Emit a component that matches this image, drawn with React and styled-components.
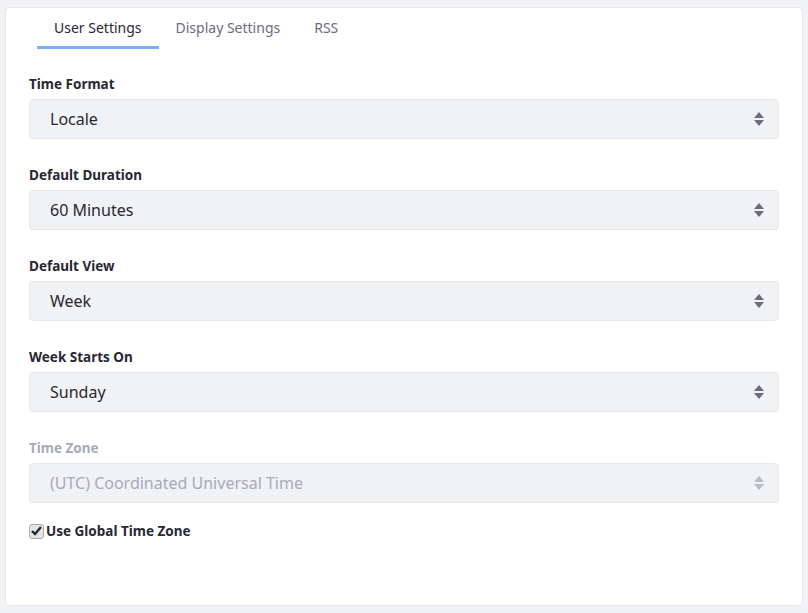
import React from "react";
import styled, { createGlobalStyle } from "styled-components";

const Global = createGlobalStyle`
  body { margin: 0; background: #f1f2f5; font-family: "Noto Sans", "Open Sans", sans-serif; }
`;
const Card = styled.div`
  margin: 7px 5px 0 5px; width: 798px; height: 599px; box-sizing: border-box;
  background: #fff; border: 1px solid #e7e7ed; border-radius: 4px; padding: 0 23px;
`;
const Tabs = styled.div`display: flex; padding-left: 8px; height: 41px;`;
const Tab = styled.div`
  padding: 10px 17px 0; font-size: 14px; color: ${p => p.$active ? "#272833" : "#6b6c7e"};
  box-sizing: border-box; border-bottom: 3px solid ${p => p.$active ? "#80acff" : "transparent"};
`;
const Form = styled.div`display: flex; flex-direction: column; padding-top: 25px;`;
const Group = styled.div`margin-bottom: 26px;`;
const Label = styled.div`
  font-size: 13.5px; font-weight: 700; color: ${p => p.$disabled ? "#a7a9bc" : "#272833"};
  margin-bottom: 5px; line-height: 20px;
`;
const Select = styled.div`
  height: 40px; border-radius: 4px; background: #f1f2f5; border: 1px solid #e7e7ed;
  box-sizing: border-box; display: flex; align-items: center; justify-content: space-between;
  padding: 0 14px 0 20px; font-size: 16px; color: ${p => p.$disabled ? "#a7a9bc" : "#272833"};
`;
const Check = styled.label`
  display: flex; align-items: center; gap: 2px; font-size: 13.5px; font-weight: 700; color: #272833;
`;
const Box = styled.span`
  width: 15px; height: 15px; border-radius: 3px; background: #e4e4e8; border: 1px solid #aaa;
  box-sizing: border-box; display: flex; align-items: center; justify-content: center;
`;

const Arrows = ({ c }) => (
  <svg width="10" height="14" viewBox="0 0 10 14"><path d="M5 0L10 6H0z M5 14L0 8h10z" fill={c} /></svg>
);

const fields = [
  ["Time Format", "Locale"],
  ["Default Duration", "60 Minutes"],
  ["Default View", "Week"],
  ["Week Starts On", "Sunday"],
];

export default function App() {
  return (
    <>
      <Global />
      <Card>
        <Tabs>
          <Tab $active>User Settings</Tab>
          <Tab>Display Settings</Tab>
          <Tab>RSS</Tab>
        </Tabs>
        <Form>
          {fields.map(([l, v]) => (
            <Group key={l}>
              <Label>{l}</Label>
              <Select>{v}<Arrows c="#6b6c7e" /></Select>
            </Group>
          ))}
          <Group style={{ marginBottom: 19 }}>
            <Label $disabled>Time Zone</Label>
            <Select $disabled>(UTC) Coordinated Universal Time<Arrows c="#b9bac8" /></Select>
          </Group>
          <Check>
            <Box>
              <svg width="11" height="10" viewBox="0 0 11 10"><path d="M1 5l3 3 6-7" stroke="#272833" strokeWidth="2.4" fill="none" /></svg>
            </Box>
            Use Global Time Zone
          </Check>
        </Form>
      </Card>
    </>
  );
}
